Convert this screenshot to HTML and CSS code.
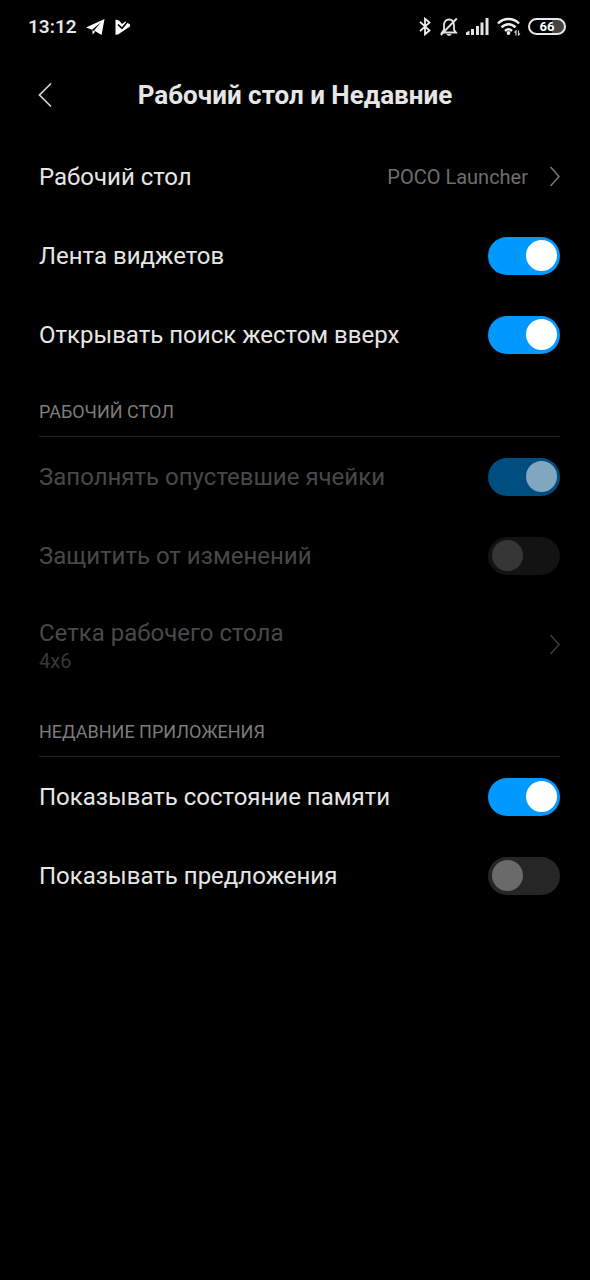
FILE: index.html
```html
<!DOCTYPE html>
<html lang="ru">
<head>
<meta charset="utf-8">
<meta name="viewport" content="width=device-width, initial-scale=1">
<title>Рабочий стол и Недавние</title>
<link rel="stylesheet" href="styles.css">
</head>
<body>
<div class="status">
  <span class="clock">13:12</span>
  <svg class="telegram" width="19" height="16" viewBox="0 0 19 16"><path fill="#fff" d="M18.500 0 0 8.600l6 2.200L15 3.200 8 11.400 15.600 16z"/><path fill="#fff" d="M6.500 11.300v4.200l2.700-2.700z"/></svg>
  <svg class="play" width="15" height="16" viewBox="0 0 15 16"><path fill="#fff" d="M.5.5 4 1.500 7 5l3.500-2.500L15 5.500v2L3 15.500l-2.500.2z"/><path fill="none" stroke="#000" stroke-width="1.600" d="m3 5.500 4 3.800 5.500-6.500"/></svg>
  <span class="spacer"></span>
  <svg class="bluetooth" width="12" height="19" viewBox="0 0 12 19"><path fill="none" stroke="#eee" stroke-width="1.800" d="m1 4.800 9.500 8.700L6 17.300V1.700l4.500 3.800L1 14.200"/></svg>
  <svg class="bell" width="18" height="20" viewBox="0 0 18 20"><path fill="none" stroke="#e4e4e4" stroke-width="1.800" d="M4 12.800V8.500C4 4.700 5.800 2.500 9 2.500s5 2.200 5 6v4.300l2 2.700H2zM.8 18 16.800 1.500"/><path fill="#e4e4e4" d="M6.500 17h5c-.7 2.400-4.300 2.400-5 0z"/></svg>
  <svg class="signal" width="23" height="17" viewBox="0 0 23 17"><path fill="#e4e4e4" d="M0 14.500 3.500 12.500V17H0zM5 11h3v6H5zM10 8h3v9h-3zM14.500 4.500h3V17h-3zM19.500 0h3v17h-3z"/></svg>
  <svg class="wifi" width="24" height="19" viewBox="0 0 24 19"><g fill="none" stroke="#eee" stroke-width="2.500"><path d="M1 6.500c5.500-6 15.500-6 21 0M4.500 10.400c4-4.200 10-4.200 14 0M8 14c2.200-2.200 4.800-2.200 7 0"/></g><circle cx="11.500" cy="16" r="1.900" fill="#eee"/><path fill="none" stroke="#ccc" stroke-width="1.200" d="m17.500 15.500 1.500-1.500v4.500M21.500 13.500v4.500l1.500-1.500"/></svg>
  <span class="battery">66</span>
</div>

<header class="bar">
  <button class="back" aria-label="Назад"><svg width="14" height="26" viewBox="0 0 14 26"><path fill="none" stroke="#d4d4d4" stroke-width="1.700" d="M13 1.500 1.500 13 13 24.500"/></svg></button>
  <h1 class="title">Рабочий стол и Недавние</h1>
</header>

<main class="settings">
  <button class="row">
    <span class="label">Рабочий стол</span>
    <span class="value">POCO Launcher</span>
    <svg class="chevron" width="11" height="21" viewBox="0 0 11 21"><path fill="none" stroke="#777" stroke-width="1.500" d="m1.500 1 8.500 9.500L1.500 20"/></svg>
  </button>
  <label class="row"><span class="label">Лента виджетов</span><input class="switch" type="checkbox" role="switch" checked></label>
  <label class="row"><span class="label">Открывать поиск жестом вверх</span><input class="switch" type="checkbox" role="switch" checked></label>

  <h2 class="section">РАБОЧИЙ СТОЛ</h2>
  <label class="row dim"><span class="label">Заполнять опустевшие ячейки</span><input class="switch" type="checkbox" role="switch" checked disabled></label>
  <label class="row dim"><span class="label">Защитить от изменений</span><input class="switch" type="checkbox" role="switch" disabled></label>
  <button class="row tall dim" disabled>
    <span class="stack"><span class="label">Сетка рабочего стола</span><span class="note">4x6</span></span>
    <svg class="chevron" width="11" height="21" viewBox="0 0 11 21"><path fill="none" stroke="#3c3c3c" stroke-width="1.500" d="m1.500 1 8.500 9.500L1.500 20"/></svg>
  </button>

  <h2 class="section">НЕДАВНИЕ ПРИЛОЖЕНИЯ</h2>
  <label class="row"><span class="label">Показывать состояние памяти</span><input class="switch" type="checkbox" role="switch" checked></label>
  <label class="row"><span class="label">Показывать предложения</span><input class="switch" type="checkbox" role="switch"></label>
</main>
</body>
</html>
```
FILE: styles.css
```css
* {
  box-sizing: border-box;
}

body {
  margin: 0;
  min-height: 100vh;
  background: #000;
  color: #e6e6e6;
  font-family: Roboto, "Noto Sans", sans-serif;
}

button {
  padding: 0;
  border: 0;
  background: none;
  color: inherit;
  font: inherit;
  text-align: left;
}

svg {
  display: block;
  flex: none;
}

.status {
  display: flex;
  align-items: center;
  height: 53px;
  padding: 0 24px 0 28px;
}

.clock {
  font-size: 19px;
  font-weight: 600;
  line-height: 24px;
}

.telegram {
  margin-left: 9px;
}

.play {
  margin-left: 10px;
}

.spacer {
  flex: 1;
}

.bell {
  margin-left: 9px;
}

.signal {
  margin-left: 8px;
}

.wifi {
  margin-left: 8px;
}

.battery {
  width: 38px;
  height: 17px;
  margin-left: 7px;
  border: 2px solid #e8e8e8;
  border-radius: 9px;
  background: linear-gradient(90deg, #000 66%, #444 66%);
  color: #fff;
  font-size: 13px;
  font-weight: 700;
  line-height: 14px;
  text-align: center;
}

.bar {
  display: grid;
  grid-template-columns: 40px 1fr 40px;
  align-items: center;
  height: 84px;
  padding: 0 38px;
}

.back {
  height: 48px;
}

.title {
  margin: 0;
  font-size: 26px;
  font-weight: 700;
  line-height: 32px;
  text-align: center;
  white-space: nowrap;
}

.settings {
  padding: 0 30px 0 39px;
}

.row {
  display: flex;
  align-items: center;
  width: 100%;
  height: 79px;
}

.tall {
  height: 99px;
}

.label {
  flex: 1;
  font-size: 24px;
  line-height: 32px;
}

.stack {
  display: flex;
  flex: 1;
  flex-direction: column;
}

.value {
  color: #6e6e6e;
  font-size: 20px;
  line-height: 24px;
}

.note {
  color: #383838;
  font-size: 20px;
  line-height: 24px;
}

.chevron {
  margin-left: 21px;
}

.dim {
  color: #484848;
}

.section {
  display: flex;
  align-items: flex-end;
  height: 63px;
  margin: 0;
  padding-bottom: 12px;
  border-bottom: 1px solid #222;
  color: #7c7c7c;
  font-size: 18px;
  font-weight: 400;
  line-height: 24px;
}

.switch {
  appearance: none;
  display: flex;
  align-items: center;
  flex: none;
  width: 72px;
  height: 38px;
  margin: 0;
  padding: 0 4px;
  border-radius: 19px;
  background: #262626;
}

.switch::before {
  content: "";
  width: 31px;
  height: 31px;
  border-radius: 50%;
  background: #6a6a6a;
}

.switch:checked {
  justify-content: flex-end;
  padding: 0 3px;
  background: #0099ff;
}

.switch:checked::before {
  background: #fff;
}

.switch:disabled {
  background: #131313;
}

.switch:disabled::before {
  background: #363636;
}

.switch:checked:disabled {
  background: #004d80;
}

.switch:checked:disabled::before {
  background: #80a6c0;
}
```
